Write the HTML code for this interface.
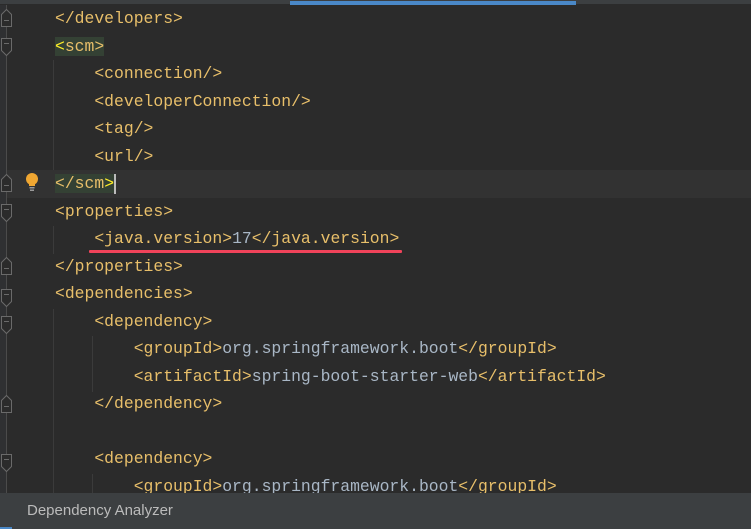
<!DOCTYPE html>
<html><head><style>
body{margin:0;width:751px;height:529px;background:#2b2b2b;overflow:hidden;position:relative;font-family:"Liberation Mono",monospace;}
.l{position:absolute;left:55px;height:27.5px;line-height:27.5px;font-size:16.4px;color:#e8bf6a;white-space:pre;}
.t{color:#a9b7c6}
.n{color:#6897bb}
.y{color:#ffef28}
.hl{background:#344134}
.g{position:absolute;width:1px;background:#3b3b3b;}
</style></head><body>
<div style="position:absolute;top:0;left:0;width:751px;height:4px;background:#3c3f41"></div>
<div style="position:absolute;top:1px;left:290px;width:286px;height:4px;background:#4a88c7"></div>
<div style="position:absolute;top:170px;left:0;width:751px;height:28px;background:#323232"></div>
<div style="position:absolute;top:5px;left:0;width:7px;height:490px;background:#2f3032"></div>
<div style="position:absolute;top:5px;left:6px;width:1px;height:490px;background:#4b4b4b"></div>
<div class="g" style="left:53px;top:60px;height:110px"></div>
<div class="g" style="left:53px;top:226px;height:28px"></div>
<div class="g" style="left:53px;top:309px;height:185px"></div>
<div class="g" style="left:92px;top:336px;height:56px"></div>
<div class="g" style="left:92px;top:474px;height:20px"></div>
<svg style="position:absolute;left:0;top:0" width="20" height="529">
<g fill="#2b2b2b" stroke="#6a6a6a" stroke-width="1">
<path d="M1.5 26.5V14.5L6.5 9.5L11.5 14.5V26.5Z M4 20.5h5"/>
<path d="M1.5 38.5V50.5L6.5 55.5L11.5 50.5V38.5Z M4 43.5h5"/>
<path d="M1.5 191.5V179.5L6.5 174.5L11.5 179.5V191.5Z M4 185.5h5"/>
<path d="M1.5 204.5V216.5L6.5 221.5L11.5 216.5V204.5Z M4 209.5h5"/>
<path d="M1.5 274.5V262.5L6.5 257.5L11.5 262.5V274.5Z M4 268.5h5"/>
<path d="M1.5 289.5V301.5L6.5 306.5L11.5 301.5V289.5Z M4 294.5h5"/>
<path d="M1.5 316.5V328.5L6.5 333.5L11.5 328.5V316.5Z M4 321.5h5"/>
<path d="M1.5 412.5V400.5L6.5 395.5L11.5 400.5V412.5Z M4 406.5h5"/>
<path d="M1.5 454.5V466.5L6.5 471.5L11.5 466.5V454.5Z M4 459.5h5"/>
</g></svg>
<svg style="position:absolute;left:24px;top:172px" width="16" height="20"><circle cx="8" cy="7" r="6" fill="#f0a732"/><rect x="5" y="12" width="6" height="2" fill="#f0a732"/><rect x="5.5" y="15" width="5" height="1.5" fill="#999"/><rect x="6" y="17.5" width="4" height="1.5" fill="#999"/></svg>
<div class="l" style="top:5px">&lt;/developers&gt;</div>
<div class="l" style="top:32.5px"><span class="hl"><span class="y">&lt;</span>scm&gt;</span></div>
<div class="l" style="top:60px">    &lt;connection/&gt;</div>
<div class="l" style="top:87.5px">    &lt;developerConnection/&gt;</div>
<div class="l" style="top:115px">    &lt;tag/&gt;</div>
<div class="l" style="top:142.5px">    &lt;url/&gt;</div>
<div class="l" style="top:170px"><span class="hl">&lt;/scm<span class="y">&gt;</span></span><span style="display:inline-block;width:2px;height:20px;background:#bbb;vertical-align:middle"></span></div>
<div class="l" style="top:197.5px">&lt;properties&gt;</div>
<div class="l" style="top:225px">    &lt;java.version&gt;<span class="t">17</span>&lt;/java.version&gt;</div>
<div style="position:absolute;left:89px;top:250px;width:313px;height:3px;background:#f0435a;border-radius:1px"></div>
<div class="l" style="top:252.5px">&lt;/properties&gt;</div>
<div class="l" style="top:280px">&lt;dependencies&gt;</div>
<div class="l" style="top:307.5px">    &lt;dependency&gt;</div>
<div class="l" style="top:335px">        &lt;groupId&gt;<span class="t">org.springframework.boot</span>&lt;/groupId&gt;</div>
<div class="l" style="top:362.5px">        &lt;artifactId&gt;<span class="t">spring-boot-starter-web</span>&lt;/artifactId&gt;</div>
<div class="l" style="top:390px">    &lt;/dependency&gt;</div>
<div class="l" style="top:445px">    &lt;dependency&gt;</div>
<div class="l" style="top:473px">        &lt;groupId&gt;<span class="t">org.springframework.boot</span>&lt;/groupId&gt;</div>
<div style="position:absolute;left:0;top:493px;width:751px;height:36px;background:#3c3f41;font-family:'Liberation Sans',sans-serif;font-size:15px;color:#bbbbbb;line-height:36px;padding-left:27px;box-sizing:border-box">Dependency Analyzer</div>
<div style="position:absolute;left:0;top:527px;width:12px;height:2px;background:#4a88c7"></div>
</body></html>
